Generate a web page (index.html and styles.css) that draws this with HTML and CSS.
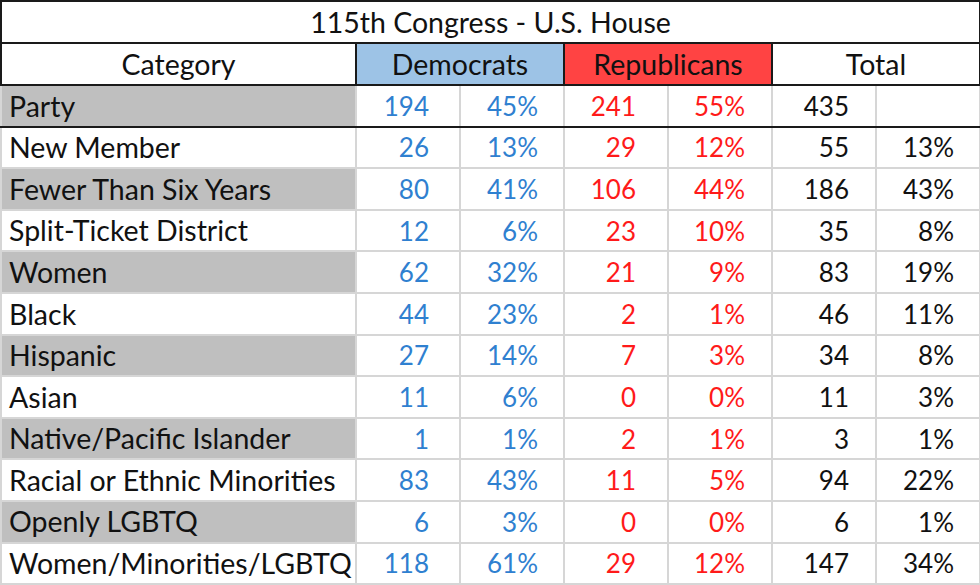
FILE: index.html
```html
<!DOCTYPE html>
<html>
<head>
<meta charset="utf-8">
<link rel="stylesheet" href="styles.css">
</head>
<body>
<table class="tbl">
  <colgroup>
    <col class="c-cat">
    <col class="c-num"><col class="c-num">
    <col class="c-num"><col class="c-num">
    <col class="c-num"><col class="c-num">
  </colgroup>
  <tr class="r-title"><td colspan="7" class="title">115th Congress - U.S. House</td></tr>
  <tr class="r-head">
    <td class="head">Category</td>
    <td colspan="2" class="head dem-h grp">Democrats</td>
    <td colspan="2" class="head rep-h grp">Republicans</td>
    <td colspan="2" class="head grp">Total</td>
  </tr>
  <tr class="first">
    <td class="cat shade">Party</td>
    <td class="grp n d n1">194</td><td class="n d p1">45%</td>
    <td class="grp n r n2">241</td><td class="n r p2">55%</td>
    <td class="grp n t n3">435</td><td class="n t p3"></td>
  </tr>
  <tr>
    <td class="cat">New Member</td>
    <td class="grp n d n1">26</td><td class="n d p1">13%</td>
    <td class="grp n r n2">29</td><td class="n r p2">12%</td>
    <td class="grp n t n3">55</td><td class="n t p3">13%</td>
  </tr>
  <tr>
    <td class="cat shade">Fewer Than Six Years</td>
    <td class="grp n d n1">80</td><td class="n d p1">41%</td>
    <td class="grp n r n2">106</td><td class="n r p2">44%</td>
    <td class="grp n t n3">186</td><td class="n t p3">43%</td>
  </tr>
  <tr>
    <td class="cat">Split-Ticket District</td>
    <td class="grp n d n1">12</td><td class="n d p1">6%</td>
    <td class="grp n r n2">23</td><td class="n r p2">10%</td>
    <td class="grp n t n3">35</td><td class="n t p3">8%</td>
  </tr>
  <tr>
    <td class="cat shade">Women</td>
    <td class="grp n d n1">62</td><td class="n d p1">32%</td>
    <td class="grp n r n2">21</td><td class="n r p2">9%</td>
    <td class="grp n t n3">83</td><td class="n t p3">19%</td>
  </tr>
  <tr>
    <td class="cat">Black</td>
    <td class="grp n d n1">44</td><td class="n d p1">23%</td>
    <td class="grp n r n2">2</td><td class="n r p2">1%</td>
    <td class="grp n t n3">46</td><td class="n t p3">11%</td>
  </tr>
  <tr>
    <td class="cat shade">Hispanic</td>
    <td class="grp n d n1">27</td><td class="n d p1">14%</td>
    <td class="grp n r n2">7</td><td class="n r p2">3%</td>
    <td class="grp n t n3">34</td><td class="n t p3">8%</td>
  </tr>
  <tr>
    <td class="cat">Asian</td>
    <td class="grp n d n1">11</td><td class="n d p1">6%</td>
    <td class="grp n r n2">0</td><td class="n r p2">0%</td>
    <td class="grp n t n3">11</td><td class="n t p3">3%</td>
  </tr>
  <tr>
    <td class="cat shade">Native/Pacific Islander</td>
    <td class="grp n d n1">1</td><td class="n d p1">1%</td>
    <td class="grp n r n2">2</td><td class="n r p2">1%</td>
    <td class="grp n t n3">3</td><td class="n t p3">1%</td>
  </tr>
  <tr>
    <td class="cat">Racial or Ethnic Minorities</td>
    <td class="grp n d n1">83</td><td class="n d p1">43%</td>
    <td class="grp n r n2">11</td><td class="n r p2">5%</td>
    <td class="grp n t n3">94</td><td class="n t p3">22%</td>
  </tr>
  <tr>
    <td class="cat shade">Openly LGBTQ</td>
    <td class="grp n d n1">6</td><td class="n d p1">3%</td>
    <td class="grp n r n2">0</td><td class="n r p2">0%</td>
    <td class="grp n t n3">6</td><td class="n t p3">1%</td>
  </tr>
  <tr>
    <td class="cat">Women/Minorities/LGBTQ</td>
    <td class="grp n d n1">118</td><td class="n d p1">61%</td>
    <td class="grp n r n2">29</td><td class="n r p2">12%</td>
    <td class="grp n t n3">147</td><td class="n t p3">34%</td>
  </tr>
</table>
</body>
</html>
```
FILE: styles.css
```css
html, body {
  margin: 0;
  padding: 0;
  background: #ffffff;
}

.tbl {
  width: 980px;
  height: 585px;
  border-collapse: collapse;
  table-layout: fixed;
  font-family: Lato, "Open Sans", sans-serif;
  font-size: 28.5px;
  color: #111111;
  border: 2px solid #1a1a1a;
}

.c-cat { width: 355px; }
.c-num { width: 104px; }

.tbl td {
  border: 2px solid #d6d6d6;
  padding: 0;
  white-space: nowrap;
  overflow: hidden;
  vertical-align: middle;
  line-height: 1;
}

.tbl tr { height: 41.6px; }
.tbl tr.r-title, .tbl tr.r-head { height: 42px; }

.tbl .title {
  text-align: center;
  border: 2px solid #1a1a1a;
}

.tbl .head {
  text-align: center;
  border: 2px solid #1a1a1a;
}

.dem-h { background: #9dc3e6; }
.rep-h { background: #ff4343; }

.tbl .grp { border-left: 2px solid #1a1a1a; }
.tbl tr.first td { border-bottom: 2px solid #1a1a1a; }

.cat {
  text-align: left;
  padding-left: 7px !important;
}
.shade { background: #bfbfbf; }

.n {
  text-align: right;
  font-size: 26px;
}
.d { color: #2f80d0; }
.r { color: #ff1a1a; }
.t { color: #111111; }

.n1 { padding-right: 30px !important; }
.p1 { padding-right: 25px !important; }
.n2 { padding-right: 31px !important; }
.p2 { padding-right: 26px !important; }
.n3 { padding-right: 26px !important; }
.p3 { padding-right: 25px !important; }
```
